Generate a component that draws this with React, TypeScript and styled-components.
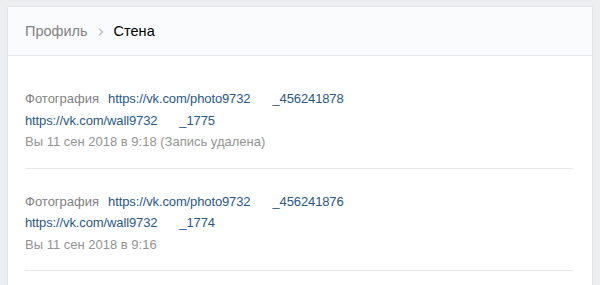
import styled, { createGlobalStyle } from "styled-components";

const GlobalStyle = createGlobalStyle`
    body {
        margin: 0;
        background: #edeef0;
        font-family: "Liberation Sans", Arial, sans-serif;
        font-size: 13px;
    }
`;

const Page = styled.div`
    padding: 6px 7px 0 7px;
    height: 285px;
    overflow: hidden;
    box-sizing: border-box;
`;

const Card = styled.div`
    background: #fff;
    border: 1px solid #e3e4e8;
    border-bottom: none;
    border-radius: 2px 2px 0 0;
    min-height: 300px;
`;

const Header = styled.div`
    display: flex;
    align-items: center;
    height: 48px;
    padding: 0 17px;
    background: #fafbfc;
    border-bottom: 1px solid #e7e8ec;
    font-size: 14.5px;
`;

const Crumb = styled.span<{ current?: boolean }>`
    color: ${(props) => (props.current ? "#000" : "#828282")};
`;

const Chevron = styled.svg`
    width: 6px;
    height: 10px;
    margin: 1px 10px 0 10px;
`;

const List = styled.div`
    padding: 0 19px 0 17px;
`;

const Entry = styled.div`
    padding: 32px 0 15px;
    border-bottom: 1px solid #e7e8ec;
    line-height: 21.5px;

    & + & {
        padding-top: 22px;
    }
`;

const Row = styled.div`
    display: flex;
    align-items: baseline;
    white-space: nowrap;
`;

const Label = styled.span`
    color: #828282;
    margin-right: 9px;
`;

const Link = styled.a`
    color: #2a5885;
    text-decoration: none;
    letter-spacing: -0.12px;
`;

const Hidden = styled.span`
    display: inline-block;
    width: 22px;
`;

const Date = styled.div`
    color: #939393;
`;

const entries = [
    { photo: "456241878", wall: "1775", date: "Вы 11 сен 2018 в 9:18 (Запись удалена)" },
    { photo: "456241876", wall: "1774", date: "Вы 11 сен 2018 в 9:16" },
];

const App = () => {
    return (
        <>
            <GlobalStyle />
            <Page>
                <Card>
                    <Header>
                        <Crumb>Профиль</Crumb>
                        <Chevron viewBox="0 0 6 10">
                            <path d="M1.2 1.8 4.5 5 1.2 8.2" fill="none" stroke="#b8bcc2" strokeWidth="1.2" />
                        </Chevron>
                        <Crumb current>Стена</Crumb>
                    </Header>
                    <List>
                        {entries.map((e, i) => (
                            <Entry key={i}>
                                <Row>
                                    <Label>Фотография</Label>
                                    <Link href="#">
                                        https://vk.com/photo9732<Hidden />_{e.photo}
                                    </Link>
                                </Row>
                                <Row>
                                    <Link href="#">
                                        https://vk.com/wall9732<Hidden />_{e.wall}
                                    </Link>
                                </Row>
                                <Date>{e.date}</Date>
                            </Entry>
                        ))}
                    </List>
                </Card>
            </Page>
        </>
    );
};

export default App;
